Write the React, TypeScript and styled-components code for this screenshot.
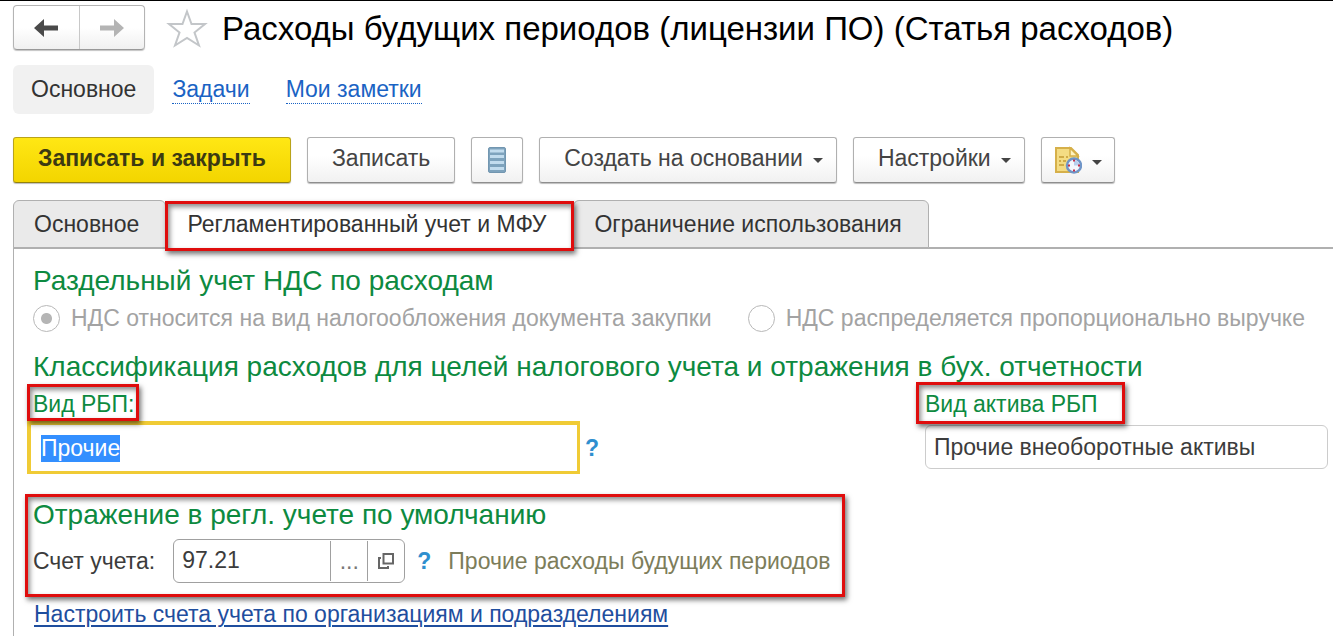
import React, { useEffect, useRef } from "react";
import styled, { createGlobalStyle, css } from "styled-components";

const GlobalStyle = createGlobalStyle`
  *, *::before, *::after { box-sizing: border-box; }
  body {
    margin: 0;
    background: #fff;
    color: #3c3c3c;
    font-family: "Liberation Sans", Arial, sans-serif;
    font-size: 23px;
    line-height: 28px;
  }
  button, input { font: inherit; color: inherit; }
`;

const Page = styled.main`
  display: flex;
  flex-direction: column;
  min-height: 100vh;
  border-top: 1px solid #000;
`;

const Header = styled.header`
  display: flex;
  align-items: center;
  padding: 4px 13px 0;
`;

const History = styled.div`
  display: flex;
  width: 132px;
  height: 45px;
  border: 1px solid #b4b4b4;
  border-bottom-color: #999;
  border-radius: 4px;
  background: linear-gradient(#fff 50%, #f0f0f0);
  box-shadow: 0 1px 1px #c4c4c4;
`;

const HistoryButton = styled.button`
  flex: 1;
  display: flex;
  align-items: center;
  justify-content: center;
  padding: 0;
  border: 0;
  background: none;
  color: #4a4a4a;

  &:disabled { color: #b4b4b4; }
  & + & { border-left: 1px solid #c8c8c8; }
`;

const StarButton = styled.button`
  display: flex;
  margin-left: 21px;
  padding: 0;
  border: 0;
  background: none;
`;

const Title = styled.h1`
  margin: 2px 0 0 14px;
  color: #000;
  font-size: 33px;
  font-weight: 400;
  line-height: 40px;
  white-space: nowrap;
`;

const SubNav = styled.nav`
  display: flex;
  align-items: center;
  gap: 36px;
  padding: 15px 13px 0;
`;

const SubNavCurrent = styled.a`
  margin-right: -18px;
  padding: 10px 18px 11px;
  border-radius: 6px;
  background: #f1f1f1;
  color: #333;
  text-decoration: none;
`;

const SubNavLink = styled.a`
  border-bottom: 1px dotted #1a63c4;
  color: #1a63c4;
  text-decoration: none;
  white-space: nowrap;
`;

const Toolbar = styled.div`
  display: flex;
  gap: 16px;
  padding: 23px 13px 0;
`;

const ToolButton = styled.button<{ $primary?: boolean; $compact?: boolean; $menu?: boolean }>`
  display: flex;
  align-items: center;
  gap: 10px;
  height: 46px;
  padding: ${(p) => (p.$compact ? "0 12px" : p.$menu ? "0 13px 4px 24px" : "0 24px 4px")};
  border: 1px solid #b0b0b0;
  border-bottom-color: #8e8e8e;
  border-radius: 3px;
  background: linear-gradient(#fff 40%, #f1f1f1);
  box-shadow: 0 1px 1px #bdbdbd;
  color: #444;
  white-space: nowrap;

  ${(p) =>
    p.$primary &&
    css`
      border-color: #b9a31a;
      border-bottom-color: #94820c;
      background: linear-gradient(#ffe714, #f3d500);
      color: #3c3a12;
      font-weight: 700;
    `}
`;

const Tabs = styled.div`
  display: flex;
  margin: 17px 0 0 13px;
  border-bottom: 2px solid #b0b0b0;
`;

const Tab = styled.button<{ $active?: boolean }>`
  position: relative;
  height: 48px;
  margin-bottom: -1px;
  padding: 0 26px 1px 20px;
  border: 1px solid #b0b0b0;
  border-radius: 6px 6px 0 0;
  background: #eaeaea;
  color: #333;
  white-space: nowrap;

  ${(p) =>
    p.$active &&
    css`
      z-index: 1;
      margin-bottom: -2px;
      border-color: transparent;
      background: #fff;
    `}
`;

/* Red call-out frame drawn over the marked part of the form. */
const Frame = styled.span<{ $inset: string }>`
  position: absolute;
  z-index: 1;
  inset: ${(p) => p.$inset};
  border: 3px solid #df0d0d;
  box-shadow: 2px 3px 5px rgba(0, 0, 0, 0.55), inset 2px 3px 5px rgba(0, 0, 0, 0.45);
  pointer-events: none;
`;

const Panel = styled.section`
  flex: 1;
  margin-left: 13px;
  padding: 15px 5px 4px 19px;
  border-left: 1px solid #b0b0b0;
`;

const Heading = styled.h2`
  margin: 0;
  color: #0d8a40;
  font-size: 28px;
  font-weight: 400;
  line-height: 34px;
  white-space: nowrap;
`;

const RadioRow = styled.div`
  display: flex;
  gap: 36px;
  margin: 6px 0 18px;
`;

const RadioLabel = styled.label`
  display: flex;
  align-items: center;
  gap: 11px;
  color: #a3a3a3;
  white-space: nowrap;
`;

const Radio = styled.input`
  appearance: none;
  width: 27px;
  height: 27px;
  margin: 0;
  border: 1px solid #b8b8b8;
  border-radius: 50%;
  background: #fff;

  &:checked { background: radial-gradient(circle, #b5b5b5 5px, #fff 6px); }
`;

const FieldGrid = styled.div`
  display: grid;
  grid-template-columns: 892fr 403fr;
  align-items: start;
  margin-top: 6px;
`;

const GreenLabel = styled.label`
  position: relative;
  display: block;
  width: max-content;
  margin-bottom: 3px;
  color: #0d8a40;
`;

const ActiveRow = styled.div`
  display: grid;
  grid-template-columns: 553fr 340fr;
  gap: 5px;
  align-items: center;
  justify-items: start;
  margin-left: -6px;
`;

const ActiveInput = styled.input`
  width: 100%;
  height: 53px;
  padding: 0 10px;
  border: 4px solid #f0cb35;
  border-right-width: 3px;
  border-bottom-width: 3px;
  outline: 0;
  background: #fff;

  &::selection { background: #338fff; color: #fff; }
`;

const PlainInput = styled.input`
  width: 100%;
  height: 44px;
  margin-top: 4px;
  padding: 0 8px;
  border: 1px solid #ccc;
  border-radius: 6px;
  background: #fff;
`;

const HelpButton = styled.button`
  padding: 0;
  border: 0;
  background: none;
  color: #2f8fcf;
  font-weight: 700;
`;

const AccountSection = styled.div`
  position: relative;
  width: max-content;
  margin-top: 24px;
`;

const AccountRow = styled.div`
  display: flex;
  align-items: center;
  margin-top: 7px;
`;

const AccountField = styled.div`
  display: flex;
  width: 232px;
  height: 44px;
  margin: 0 12px 0 18px;
  border: 1px solid #a0a0a0;
  border-radius: 6px;
`;

const AccountInput = styled.input`
  flex: 1;
  min-width: 0;
  padding: 0 8px 2px;
  border: 0;
  outline: 0;
  background: none;
`;

const AccountButton = styled.button`
  display: flex;
  align-items: center;
  justify-content: center;
  width: 37px;
  margin: 1px 0;
  padding: 0;
  border: 0;
  border-left: 1px solid #a0a0a0;
  background: none;
  color: #777;
`;

const Hint = styled.span`
  margin-left: 17px;
  color: #7d7d5a;
  white-space: nowrap;
`;

const SetupLink = styled.a`
  display: block;
  width: max-content;
  margin: 17px 0 0 1px;
  color: #1f4e9e;
  text-decoration: underline;
  text-decoration-thickness: 2px;
  text-underline-offset: 3px;
`;

const CaretIcon = styled.svg`
  margin-top: 4px;
`;

const Arrow = ({ flip }: { flip?: boolean }) => (
  <svg width="26" height="20" viewBox="0 0 26 20" aria-hidden="true">
    <path
      d="M1 10L11 1V7.500H25V12.500H11V19Z"
      fill="currentColor"
      transform={flip ? "rotate(180 13 10)" : undefined}
    />
  </svg>
);

const Star = () => (
  <svg width="42" height="40" viewBox="0 0 42 40" aria-hidden="true">
    <path
      d="M21 3.500L25.500 16H39L28.500 24.500L33 37.500L21 30L9 37.500L13.500 24.500L3 16H16.500Z"
      fill="#fff"
      stroke="#c3c6c9"
      strokeWidth="2"
    />
  </svg>
);

const Caret = () => (
  <CaretIcon width="10" height="5" viewBox="0 0 10 5" aria-hidden="true">
    <path d="M0 0H10L5 5Z" fill="#444" />
  </CaretIcon>
);

const ListIcon = () => (
  <svg width="26" height="28" viewBox="0 0 26 28" aria-hidden="true">
    <rect x="4.500" y="1.500" width="17" height="25" rx="1.500" fill="#7ea3bd" stroke="#7296b0" />
    <path d="M6 5H20M6 10.500H20M6 16.500H20M6 22.500H20" stroke="#c2dcee" strokeWidth="3" />
  </svg>
);

const NoteClockIcon = () => (
  <svg width="28" height="28" viewBox="0 0 28 28" aria-hidden="true">
    <path d="M2 2H17L24 9V26H2Z" fill="#f4dc83" stroke="#d6b04a" strokeWidth="2" />
    <path d="M16 2V10H24Z" fill="#fff3c0" stroke="#d6b04a" strokeWidth="1.500" />
    <path d="M5 11H10M12 11H14M5 15H7M9 15H12M5 19H10" stroke="#c39a35" strokeWidth="1.500" />
    <circle cx="20" cy="19.500" r="7" fill="#f4f8fd" stroke="#6f95c8" strokeWidth="2.500" />
    <path d="M20 19.500V14A5.500 5.500 0 0 1 25.500 19.500Z" fill="#b8d0ee" />
    <path d="M20 13.500V15.500M20 23.500V25.500M14 19.500H16M24 19.500H26" stroke="#c2304a" strokeWidth="2" />
  </svg>
);

const OpenIcon = () => (
  <svg width="18" height="18" viewBox="0 0 18 18" aria-hidden="true">
    <path d="M6.500 2H16V11.500H6.500ZM4 6H2V16H11V14" fill="none" stroke="#666" strokeWidth="2" />
  </svg>
);

export default function App() {
  const kindRef = useRef<HTMLInputElement>(null);

  useEffect(() => {
    kindRef.current?.focus();
    kindRef.current?.select();
  }, []);

  return (
    <Page>
      <GlobalStyle />
      <Header>
        <History>
          <HistoryButton aria-label="Назад"><Arrow /></HistoryButton>
          <HistoryButton aria-label="Вперед" disabled><Arrow flip /></HistoryButton>
        </History>
        <StarButton aria-label="Избранное"><Star /></StarButton>
        <Title>Расходы будущих периодов (лицензии ПО) (Статья расходов)</Title>
      </Header>

      <SubNav>
        <SubNavCurrent href="#main">Основное</SubNavCurrent>
        <SubNavLink href="#tasks">Задачи</SubNavLink>
        <SubNavLink href="#notes">Мои заметки</SubNavLink>
      </SubNav>

      <Toolbar>
        <ToolButton $primary>Записать и закрыть</ToolButton>
        <ToolButton>Записать</ToolButton>
        <ToolButton $compact aria-label="Список"><ListIcon /></ToolButton>
        <ToolButton $menu>Создать на основании<Caret /></ToolButton>
        <ToolButton $menu>Настройки<Caret /></ToolButton>
        <ToolButton $compact aria-label="Напоминание"><NoteClockIcon /><Caret /></ToolButton>
      </Toolbar>

      <Tabs role="tablist">
        <Tab role="tab">Основное</Tab>
        <Tab role="tab" $active aria-selected>
          Регламентированный учет и МФУ
          <Frame $inset="0 -2px -4px -2px" />
        </Tab>
        <Tab role="tab">Ограничение использования</Tab>
      </Tabs>

      <Panel>
        <Heading>Раздельный учет НДС по расходам</Heading>
        <RadioRow>
          <RadioLabel>
            <Radio type="radio" name="vat" defaultChecked disabled />
            НДС относится на вид налогообложения документа закупки
          </RadioLabel>
          <RadioLabel>
            <Radio type="radio" name="vat" disabled />
            НДС распределяется пропорционально выручке
          </RadioLabel>
        </RadioRow>

        <Heading>Классификация расходов для целей налогового учета и отражения в бух. отчетности</Heading>
        <FieldGrid>
          <div>
            <GreenLabel htmlFor="kind">
              Вид РБП:
              <Frame $inset="-6px -5px -3px -6px" />
            </GreenLabel>
            <ActiveRow>
              <ActiveInput id="kind" ref={kindRef} defaultValue="Прочие" />
              <HelpButton aria-label="Справка: вид РБП">?</HelpButton>
            </ActiveRow>
          </div>
          <div>
            <GreenLabel htmlFor="asset">
              Вид актива РБП
              <Frame $inset="-8px -27px -6px -9px" />
            </GreenLabel>
            <PlainInput id="asset" defaultValue="Прочие внеоборотные активы" />
          </div>
        </FieldGrid>

        <AccountSection>
          <Heading>Отражение в регл. учете по умолчанию</Heading>
          <AccountRow>
            <label htmlFor="account">Счет учета:</label>
            <AccountField>
              <AccountInput id="account" defaultValue="97.21" />
              <AccountButton aria-label="Выбрать">...</AccountButton>
              <AccountButton aria-label="Открыть"><OpenIcon /></AccountButton>
            </AccountField>
            <HelpButton aria-label="Справка: счет учета">?</HelpButton>
            <Hint>Прочие расходы будущих периодов</Hint>
          </AccountRow>
          <Frame $inset="-4px -14px -14px -8px" />
        </AccountSection>
        <SetupLink href="#accounts">Настроить счета учета по организациям и подразделениям</SetupLink>
      </Panel>
    </Page>
  );
}
